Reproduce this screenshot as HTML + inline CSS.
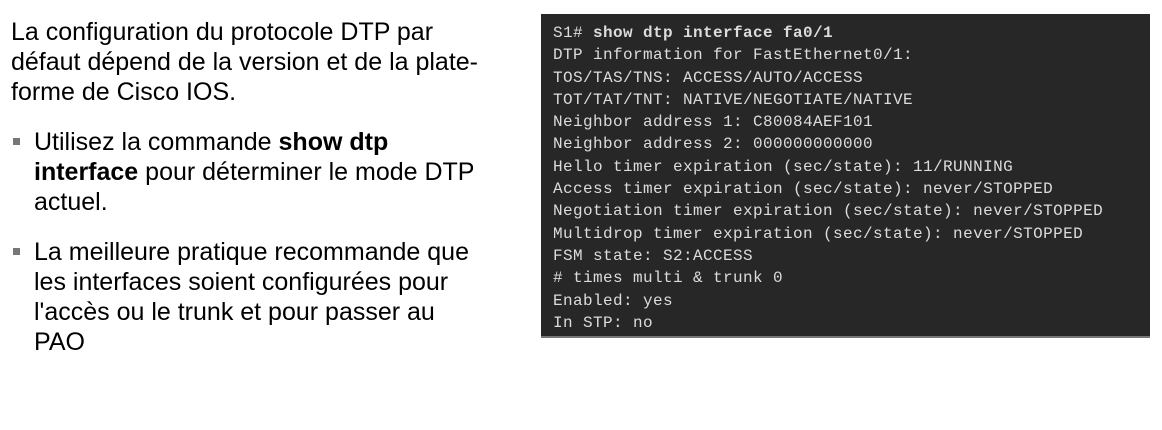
<!DOCTYPE html>
<html><head><meta charset="utf-8">
<style>
html,body{margin:0;padding:0;background:#fff;width:1162px;height:430px;overflow:hidden;}
.left{position:absolute;left:11px;top:17px;width:520px;font-family:"Liberation Sans",Arial,sans-serif;font-size:25px;line-height:30px;color:#000;}
.p1{margin:0;}
.b{position:relative;padding-left:23px;margin:0;}
.b::before{content:"";position:absolute;left:2px;top:11px;width:7px;height:7px;background:#777;}
.term{position:absolute;left:541px;top:14px;width:609px;height:322px;background:#272727;border-bottom:2px solid #777;}
.term pre{margin:0;position:absolute;left:12px;top:8px;font-family:"Liberation Mono","Courier New",monospace;font-size:16px;letter-spacing:0.4px;line-height:22.3px;color:#dcdcdc;}
b{font-weight:bold;}
</style></head><body>
<div class="left">
<p class="p1">La configuration du protocole DTP par<br>défaut dépend de la version et de la plate-<br>forme de Cisco IOS.</p>
<p class="b" style="margin-top:20px">Utilisez la commande <b>show dtp<br>interface</b> pour déterminer le mode DTP<br>actuel.</p>
<p class="b" style="margin-top:20px">La meilleure pratique recommande que<br>les interfaces soient configurées pour<br>l'accès ou le trunk et pour passer au<br>PAO</p>
</div>
<div class="term"><pre>S1# <b>show dtp interface fa0/1</b>
DTP information for FastEthernet0/1:
TOS/TAS/TNS: ACCESS/AUTO/ACCESS
TOT/TAT/TNT: NATIVE/NEGOTIATE/NATIVE
Neighbor address 1: C80084AEF101
Neighbor address 2: 000000000000
Hello timer expiration (sec/state): 11/RUNNING
Access timer expiration (sec/state): never/STOPPED
Negotiation timer expiration (sec/state): never/STOPPED
Multidrop timer expiration (sec/state): never/STOPPED
FSM state: S2:ACCESS
# times multi &amp; trunk 0
Enabled: yes
In STP: no</pre></div>
</body></html>
